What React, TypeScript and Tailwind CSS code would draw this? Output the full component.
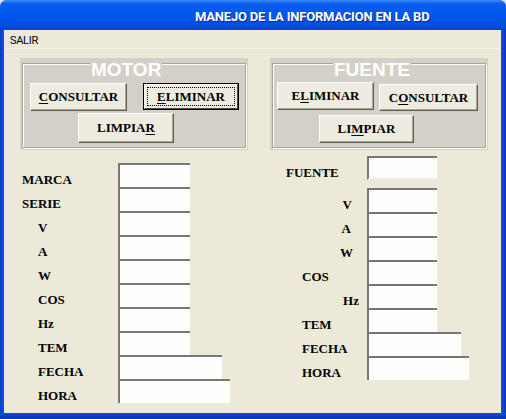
import React from 'react';

type BtnProps = { children: React.ReactNode; className?: string; focused?: boolean };

function Btn({ children, className = '', focused = false }: BtnProps) {
  if (focused) {
    return (
      <button className={`shrink-0 border border-black bg-[#eeebe0] p-0 ${className}`}>
        <div className="h-full border border-t-white border-l-white border-r-[#4a4944] border-b-[#4a4944] p-[2px]">
          <div className="flex h-full items-center justify-center border border-dotted border-black text-[13px] font-bold text-black font-['Liberation_Serif',serif]">
            {children}
          </div>
        </div>
      </button>
    );
  }
  return (
    <button
      className={`flex shrink-0 items-center justify-center border border-t-white border-l-white border-r-[#5f5d55] border-b-[#5f5d55] bg-[#eeebe0] p-0 text-[13px] font-bold text-black shadow-[inset_-1px_-1px_0_#aca899] font-['Liberation_Serif',serif] ${className}`}
    >
      {children}
    </button>
  );
}

function U({ children }: { children: React.ReactNode }) {
  return <span className="underline decoration-1 underline-offset-2">{children}</span>;
}

type PanelProps = { title: string; captionClass: string; className: string; children: React.ReactNode };

function Panel({ title, captionClass, className, children }: PanelProps) {
  return (
    <div className={`h-[92px] shrink-0 bg-[#d4d0c8] px-[2px] pt-[5px] pb-[2px] ${className}`}>
      <div className="relative h-full border border-[#a8a59c] shadow-[1px_1px_0_#fff,inset_1px_1px_0_#fff]">
        <span
          className={`absolute top-[-4px] bg-[#d4d0c8] px-px text-[19px] leading-[19px] font-bold text-white font-['Liberation_Sans',sans-serif] ${captionClass}`}
        >
          {title}
        </span>
        {children}
      </div>
    </div>
  );
}

type FieldProps = { label: string; labelClass: string; boxClass: string };

function Field({ label, labelClass, boxClass }: FieldProps) {
  return (
    <div className="flex h-[24px]">
      <div
        className={`shrink-0 whitespace-nowrap pt-[9px] text-[13px] leading-[16px] font-bold text-black font-['Liberation_Serif',serif] ${labelClass}`}
      >
        {label}
      </div>
      <div className={`h-[24px] shrink-0 border-t-2 border-l-2 border-[#777] bg-[#fefefd] ${boxClass}`} />
    </div>
  );
}

export default function App() {
  const leftLabel = 'w-[114px]';
  return (
    <div className="h-[419px] w-[506px] overflow-hidden bg-[#d8e4f8]">
      <div className="flex h-full w-full flex-col overflow-hidden rounded-t-[7px] bg-[#0844d6]">
        {/* title bar */}
        <div className="h-[30px] shrink-0 whitespace-nowrap bg-[linear-gradient(to_bottom,#3d8dff_0%,#0a5ff0_12%,#0057ec_45%,#004fe2_80%,#0046d2_100%)] pl-[195px] pt-[9px] text-[13px] leading-[16px] font-bold tracking-[-0.2px] text-white font-['Roboto',sans-serif] [text-shadow:1px_1px_0_#0b2a8c]">
          MANEJO DE LA INFORMACION EN LA BD
        </div>

        <div className="flex min-h-0 flex-1">
          <div className="w-[4px] shrink-0 bg-[linear-gradient(to_right,#0a3fc4,#0a54e6)]" />

          <div className="flex flex-1 flex-col bg-[#ece9d8]">
            {/* menu */}
            <div className="h-[18px] shrink-0 pl-[6px] pt-[4px] text-[11px] leading-[14px] tracking-[-0.3px] text-black font-['Roboto',sans-serif]">
              SALIR
            </div>
            <div className="h-px shrink-0 bg-[#f3f1e8]" />

            {/* panels */}
            <div className="mt-[9px] flex pl-[16px]">
              <Panel title="MOTOR" captionClass="left-[67px]" className="w-[228px]">
                <div className="mt-[19px] flex items-start pl-[7px]">
                  <Btn className="h-[28px] w-[97px]">
                    <U>C</U>ONSULTAR
                  </Btn>
                  <Btn focused className="ml-[16px] h-[27px] w-[96px]">
                    <U>E</U>LIMINAR
                  </Btn>
                </div>
                <div className="mt-[2px] flex pl-[55px]">
                  <Btn className="h-[30px] w-[96px]">
                    LIMPIA<U>R</U>
                  </Btn>
                </div>
              </Panel>

              <Panel title="FUENTE" captionClass="left-[60px]" className="ml-[22px] w-[218px]">
                <div className="mt-[18px] flex items-start pl-[4px]">
                  <Btn className="h-[28px] w-[97px]">
                    E<U>L</U>IMINAR
                  </Btn>
                  <Btn className="ml-[5px] mt-[2px] h-[27px] w-[99px]">
                    C<U>O</U>NSULTAR
                  </Btn>
                </div>
                <div className="mt-[4px] flex pl-[46px]">
                  <Btn className="h-[28px] w-[95px]">
                    LI<U>M</U>PIAR
                  </Btn>
                </div>
              </Panel>
            </div>

            {/* fields */}
            <div className="flex items-start">
              <div className="mt-[13px] w-[266px] shrink-0">
                <Field label="MARCA" labelClass={`${leftLabel} pl-[18px]`} boxClass="w-[72px]" />
                <Field label="SERIE" labelClass={`${leftLabel} pl-[18px]`} boxClass="w-[72px]" />
                <Field label="V" labelClass={`${leftLabel} pl-[34px]`} boxClass="w-[72px]" />
                <Field label="A" labelClass={`${leftLabel} pl-[34px]`} boxClass="w-[72px]" />
                <Field label="W" labelClass={`${leftLabel} pl-[34px]`} boxClass="w-[72px]" />
                <Field label="COS" labelClass={`${leftLabel} pl-[34px]`} boxClass="w-[72px]" />
                <Field label="Hz" labelClass={`${leftLabel} pl-[34px]`} boxClass="w-[72px]" />
                <Field label="TEM" labelClass={`${leftLabel} pl-[34px]`} boxClass="w-[72px]" />
                <Field label="FECHA" labelClass={`${leftLabel} pl-[34px]`} boxClass="w-[104px]" />
                <Field label="HORA" labelClass={`${leftLabel} pl-[34px]`} boxClass="w-[112px]" />
              </div>

              <div className="mt-[6px]">
                <Field label="FUENTE" labelClass="w-[97px] pl-[16px]" boxClass="w-[70px] border-b-2 border-b-[#efece3]" />
                <div className="mt-[8px]">
                  <Field label="V" labelClass="w-[97px] pr-[15px] text-right" boxClass="w-[70px]" />
                  <Field label="A" labelClass="w-[97px] pr-[16px] text-right" boxClass="w-[70px]" />
                  <Field label="W" labelClass="w-[97px] pr-[14px] text-right" boxClass="w-[70px]" />
                  <Field label="COS" labelClass="w-[97px] pl-[32px]" boxClass="w-[70px]" />
                  <Field label="Hz" labelClass="w-[97px] pr-[8px] text-right" boxClass="w-[70px]" />
                  <Field label="TEM" labelClass="w-[97px] pl-[32px]" boxClass="w-[70px]" />
                  <Field label="FECHA" labelClass="w-[97px] pl-[32px]" boxClass="w-[94px]" />
                  <Field label="HORA" labelClass="w-[97px] pl-[32px]" boxClass="w-[102px]" />
                </div>
              </div>
            </div>
          </div>

          <div className="w-[5px] shrink-0 bg-[linear-gradient(to_right,#0a54e6,#0838b8)]" />
        </div>
        <div className="h-[6px] shrink-0 bg-[linear-gradient(to_bottom,#0a4cdc,#0834b0)]" />
      </div>
    </div>
  );
}
